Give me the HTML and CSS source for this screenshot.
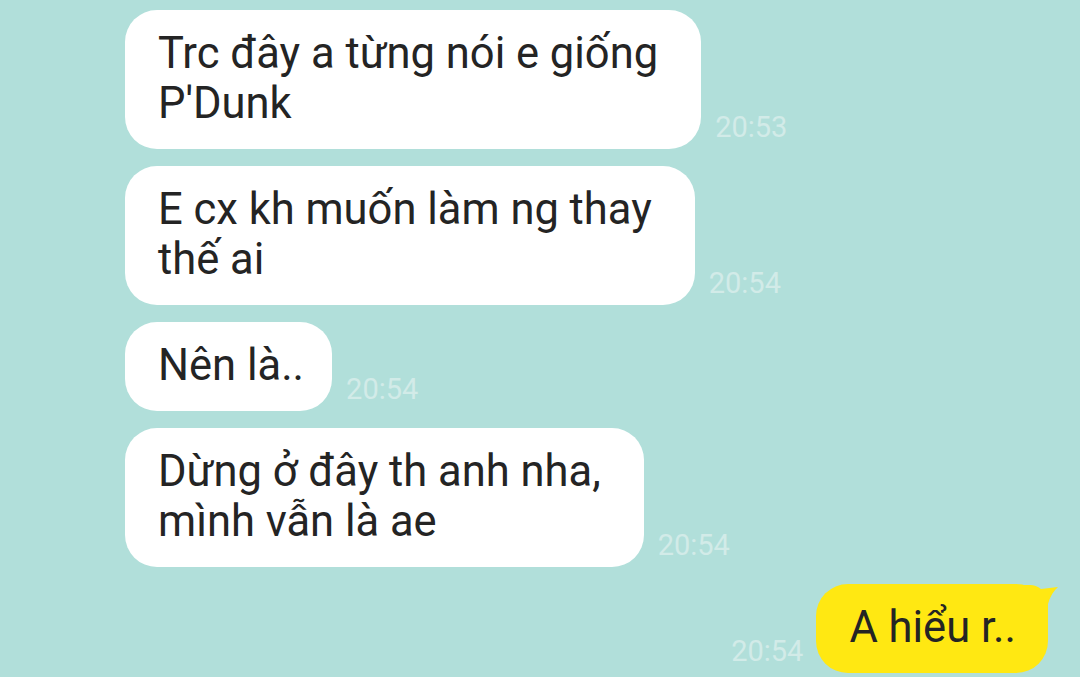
FILE: index.html
```html
<!DOCTYPE html>
<html lang="vi">

<head>
    <meta charset="UTF-8">
    <meta name="viewport" content="width=device-width, initial-scale=1.0">
    <title>Chat</title>
    <link rel="stylesheet" href="styles.css">
</head>

<body>
    <div class="chat">
        <div class="row">
            <div class="bubble multi">Trc đây a từng nói e giống<br>P'Dunk</div>
            <span class="time">20:53</span>
        </div>
        <div class="row">
            <div class="bubble multi">E cx kh muốn làm ng thay<br>thế ai</div>
            <span class="time">20:54</span>
        </div>
        <div class="row">
            <div class="bubble">Nên là..</div>
            <span class="time">20:54</span>
        </div>
        <div class="row">
            <div class="bubble multi">Dừng ở đây th anh nha,<br>mình vẫn là ae</div>
            <span class="time">20:54</span>
        </div>
        <div class="row me">
            <span class="time">20:54</span>
            <div class="bubble mine">
                A hiểu r..
                <svg class="tail" width="42" height="44" viewBox="0 0 42 44">
                    <path d="M0 1 L14 1 Q20 1 25 5 L42 3 Q35 9 32 20 L32 44 L0 44 Z" fill="#ffe812" />
                </svg>
            </div>
        </div>
    </div>
</body>

</html>
```

FILE: styles.css
```css
* {
    margin: 0;
    padding: 0;
    box-sizing: border-box;
}

body {
    background-color: #b1dfda;
    font-family: Roboto, "Liberation Sans", sans-serif;
    width: 1080px;
    height: 677px;
    overflow: hidden;
}

.chat {
    display: flex;
    flex-direction: column;
    gap: 17px;
    padding: 10px 32px 0 125px;
}

.row {
    display: flex;
    align-items: flex-end;
    gap: 14px;
}

.row.me {
    justify-content: flex-end;
    gap: 13px;
}

.bubble {
    position: relative;
    background-color: #fff;
    color: #242424;
    font-size: 43.5px;
    line-height: 50px;
    padding: 19px 28px 20px 33px;
    border-radius: 32px;
    white-space: nowrap;
}

.bubble.multi {
    padding-right: 43px;
}

.mine {
    background-color: #ffe812;
    padding: 19px 32px 20px 33px;
}

.tail {
    position: absolute;
    top: 0;
    right: -10px;
}

.time {
    color: #d2ebe8;
    font-size: 29px;
    line-height: 29px;
    margin-bottom: 7px;
}
```
